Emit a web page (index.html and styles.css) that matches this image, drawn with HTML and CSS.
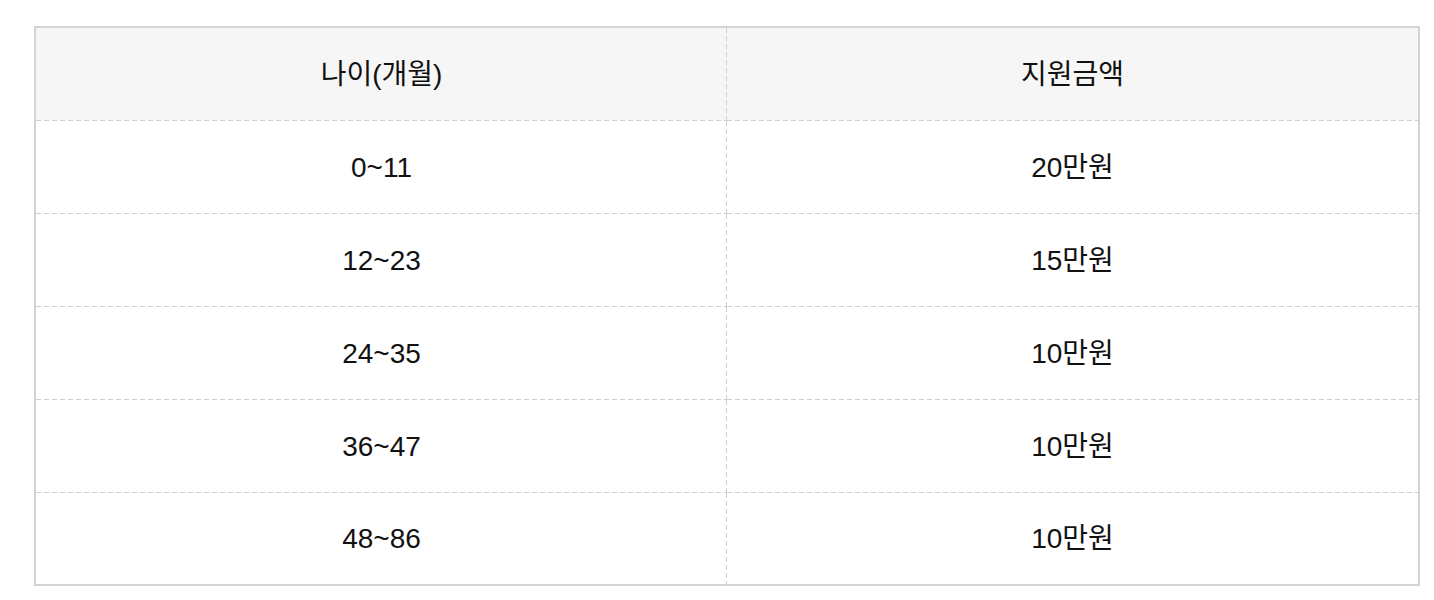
FILE: index.html
```html
<!DOCTYPE html>
<html lang="ko">
<head>
<meta charset="utf-8">
<title>지원금액</title>
<link rel="stylesheet" href="styles.css">
</head>
<body>
<div class="wrap">
  <table class="grid">
    <thead>
      <tr><th>나이(개월)</th><th>지원금액</th></tr>
    </thead>
    <tbody>
      <tr><td>0~11</td><td>20만원</td></tr>
      <tr><td>12~23</td><td>15만원</td></tr>
      <tr><td>24~35</td><td>10만원</td></tr>
      <tr><td>36~47</td><td>10만원</td></tr>
      <tr class="last"><td>48~86</td><td>10만원</td></tr>
    </tbody>
  </table>
</div>
</body>
</html>
```
FILE: styles.css
```css
html, body {
  margin: 0;
  padding: 0;
  background: #ffffff;
}
body {
  font-family: "Liberation Sans", "Noto Sans CJK KR", sans-serif;
  color: #111111;
}
.wrap {
  padding: 26px 14px 0 34px;
}
.grid {
  width: 1386px;
  border-collapse: separate;
  border-spacing: 0;
  table-layout: fixed;
  border: 2px solid #d4d4d4;
}
.grid th,
.grid td {
  width: 50%;
  height: 93px;
  padding: 0;
  text-align: center;
  vertical-align: middle;
  font-size: 28px;
  line-height: 32px;
  font-weight: normal;
  background-color: transparent;
  background-image: linear-gradient(to right, #cfcfcf 5px, transparent 5px);
  background-size: 8px 1px;
  background-position: left bottom;
  background-repeat: repeat-x;
}
.grid th {
  background-color: #f6f6f6;
}
.grid th:first-child,
.grid td:first-child {
  background-image:
    linear-gradient(to right, #cfcfcf 5px, transparent 5px),
    linear-gradient(to bottom, #cfcfcf 5px, transparent 5px);
  background-size: 8px 1px, 1px 8px;
  background-position: left bottom, right top;
  background-repeat: repeat-x, repeat-y;
}
.grid .last td {
  height: 91px;
  background-image: none;
}
.grid .last td:first-child {
  background-image: linear-gradient(to bottom, #cfcfcf 5px, transparent 5px);
  background-size: 1px 8px;
  background-position: right top;
  background-repeat: repeat-y;
}
```
